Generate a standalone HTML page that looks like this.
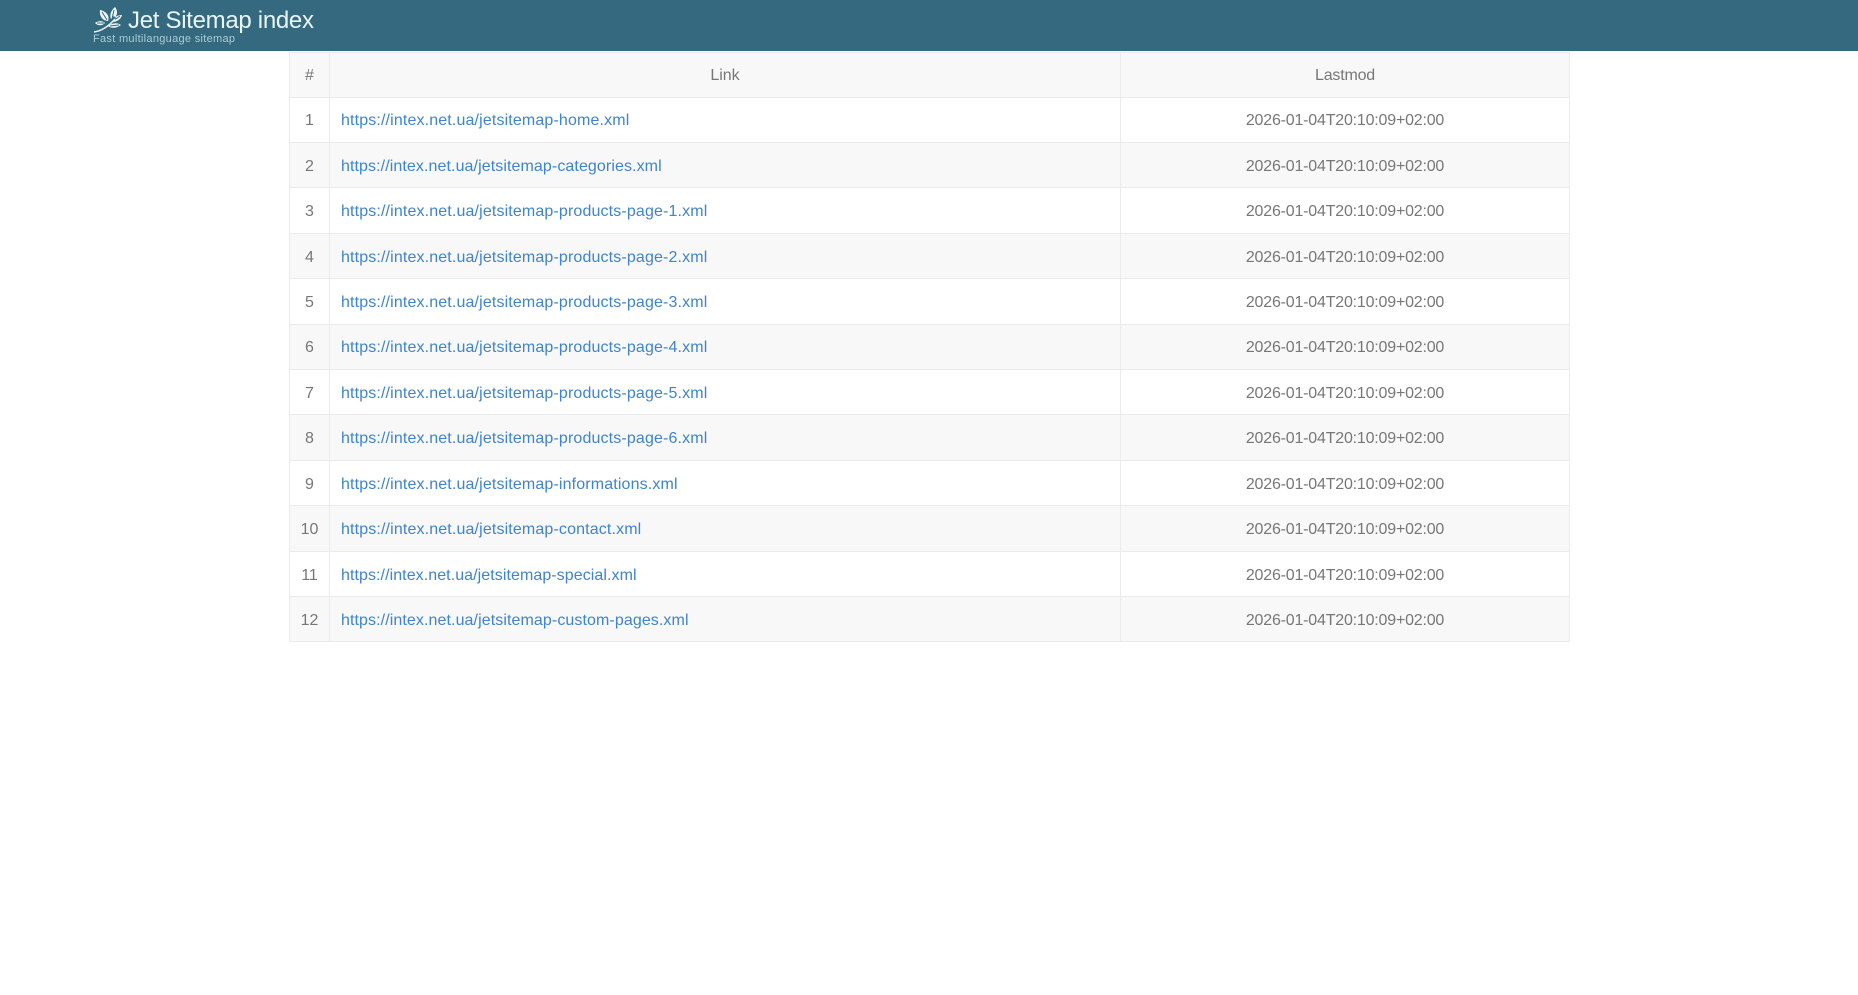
<!DOCTYPE html>
<html lang="en">
<head>
<meta charset="utf-8">
<title>Jet Sitemap index</title>
<style>
html,body{margin:0;padding:0;background:#fff;width:1858px;height:995px;overflow:hidden;font-family:"Liberation Sans",sans-serif;color:#777}
#hd{position:absolute;left:0;top:0;width:1858px;height:51px;background:#35697f}
#logo{position:absolute;left:93px;top:7px}
#title{position:absolute;left:128px;top:6px;font-size:24px;line-height:30px;color:#e8f5f7;white-space:nowrap;letter-spacing:-.3px}
#sub{position:absolute;left:93px;top:32px;font-size:11px;line-height:14px;color:#a9cdd8;letter-spacing:.3px;white-space:nowrap}
.r{position:absolute;left:289px;width:1281px;box-sizing:border-box;border:1px solid #ebebeb;border-top:0}
.s{background:#f8f8f8}
.c{position:absolute;top:0;bottom:0;padding-top:var(--p);display:flex;align-items:flex-start;justify-content:center;font-size:16px;line-height:18px;white-space:nowrap}
.a{left:0;width:39px;border-right:1px solid #ebebeb}
.b{left:40px;width:790px;border-right:1px solid #ebebeb}
.l{justify-content:flex-start;padding-left:11px;width:779px;letter-spacing:.14px}
.d{left:831px;width:448px;letter-spacing:-.2px}
a{color:#3f84cd;text-decoration:none}
</style>
</head>
<body>
<div id="hd">
<svg id="logo" width="30" height="26" viewBox="0 0 30 26" fill="#eef7f8">
<path d="M7 3C13 4 17 9 15 14C10 14 6 9 7 3Z"/>
<path d="M22 0C25 4 25 9 19 14C16 10 17 4 22 0Z"/>
<path d="M29 8C28 12 24 15 19 15C20 11 24 8 29 8Z"/>
<path d="M28 18C24 15 19 16 15 19C19 22 24 21 28 18Z"/>
<path d="M2 16C6 13 10 14 12 16C9 19 5 19 2 16Z"/>
<g fill="none" stroke="#35697f" stroke-width="1">
<path d="M9 5L14 13"/>
<path d="M21 3L19 12"/>
<path d="M27 9L20 14"/>
<path d="M26 18L17 19"/>
<path d="M4 16L11 16"/>
<path d="M1 23C8 22 15 18 22 10" stroke-width="3"/>
</g>
<path d="M1 25C8 24 15 20 22 12" fill="none" stroke="#eef7f8" stroke-width="1.4"/>
</svg>
<div id="title">Jet Sitemap index</div>
<div id="sub">Fast multilanguage sitemap</div>
</div>

<div class="r s" style="top:52px;height:46px;border-top:1px solid #ebebeb;--p:14px"><div class="c a">#</div><div class="c b">Link</div><div class="c d">Lastmod</div></div>
<div class="r" style="top:98px;height:45px;--p:14px"><div class="c a">1</div><div class="c b l"><a href="#">https://intex.net.ua/jetsitemap-home.xml</a></div><div class="c d">2026-01-04T20:10:09+02:00</div></div>
<div class="r s" style="top:143px;height:45px;--p:15px"><div class="c a">2</div><div class="c b l" style="letter-spacing:.09px"><a href="#">https://intex.net.ua/jetsitemap-categories.xml</a></div><div class="c d">2026-01-04T20:10:09+02:00</div></div>
<div class="r" style="top:188px;height:46px;--p:15px"><div class="c a">3</div><div class="c b l"><a href="#">https://intex.net.ua/jetsitemap-products-page-1.xml</a></div><div class="c d">2026-01-04T20:10:09+02:00</div></div>
<div class="r s" style="top:234px;height:45px;--p:15px"><div class="c a">4</div><div class="c b l"><a href="#">https://intex.net.ua/jetsitemap-products-page-2.xml</a></div><div class="c d">2026-01-04T20:10:09+02:00</div></div>
<div class="r" style="top:279px;height:46px;--p:15px"><div class="c a">5</div><div class="c b l"><a href="#">https://intex.net.ua/jetsitemap-products-page-3.xml</a></div><div class="c d">2026-01-04T20:10:09+02:00</div></div>
<div class="r s" style="top:325px;height:45px;--p:14px"><div class="c a">6</div><div class="c b l"><a href="#">https://intex.net.ua/jetsitemap-products-page-4.xml</a></div><div class="c d">2026-01-04T20:10:09+02:00</div></div>
<div class="r" style="top:370px;height:45px;--p:15px"><div class="c a">7</div><div class="c b l"><a href="#">https://intex.net.ua/jetsitemap-products-page-5.xml</a></div><div class="c d">2026-01-04T20:10:09+02:00</div></div>
<div class="r s" style="top:415px;height:46px;--p:15px"><div class="c a">8</div><div class="c b l"><a href="#">https://intex.net.ua/jetsitemap-products-page-6.xml</a></div><div class="c d">2026-01-04T20:10:09+02:00</div></div>
<div class="r" style="top:461px;height:45px;--p:15px"><div class="c a">9</div><div class="c b l"><a href="#">https://intex.net.ua/jetsitemap-informations.xml</a></div><div class="c d">2026-01-04T20:10:09+02:00</div></div>
<div class="r s" style="top:506px;height:46px;--p:15px"><div class="c a">10</div><div class="c b l"><a href="#">https://intex.net.ua/jetsitemap-contact.xml</a></div><div class="c d">2026-01-04T20:10:09+02:00</div></div>
<div class="r" style="top:552px;height:45px;--p:15px"><div class="c a">11</div><div class="c b l" style="letter-spacing:.07px"><a href="#">https://intex.net.ua/jetsitemap-special.xml</a></div><div class="c d">2026-01-04T20:10:09+02:00</div></div>
<div class="r s" style="top:597px;height:45px;--p:15px"><div class="c a">12</div><div class="c b l" style="letter-spacing:.09px"><a href="#">https://intex.net.ua/jetsitemap-custom-pages.xml</a></div><div class="c d">2026-01-04T20:10:09+02:00</div></div>
</body>
</html>
